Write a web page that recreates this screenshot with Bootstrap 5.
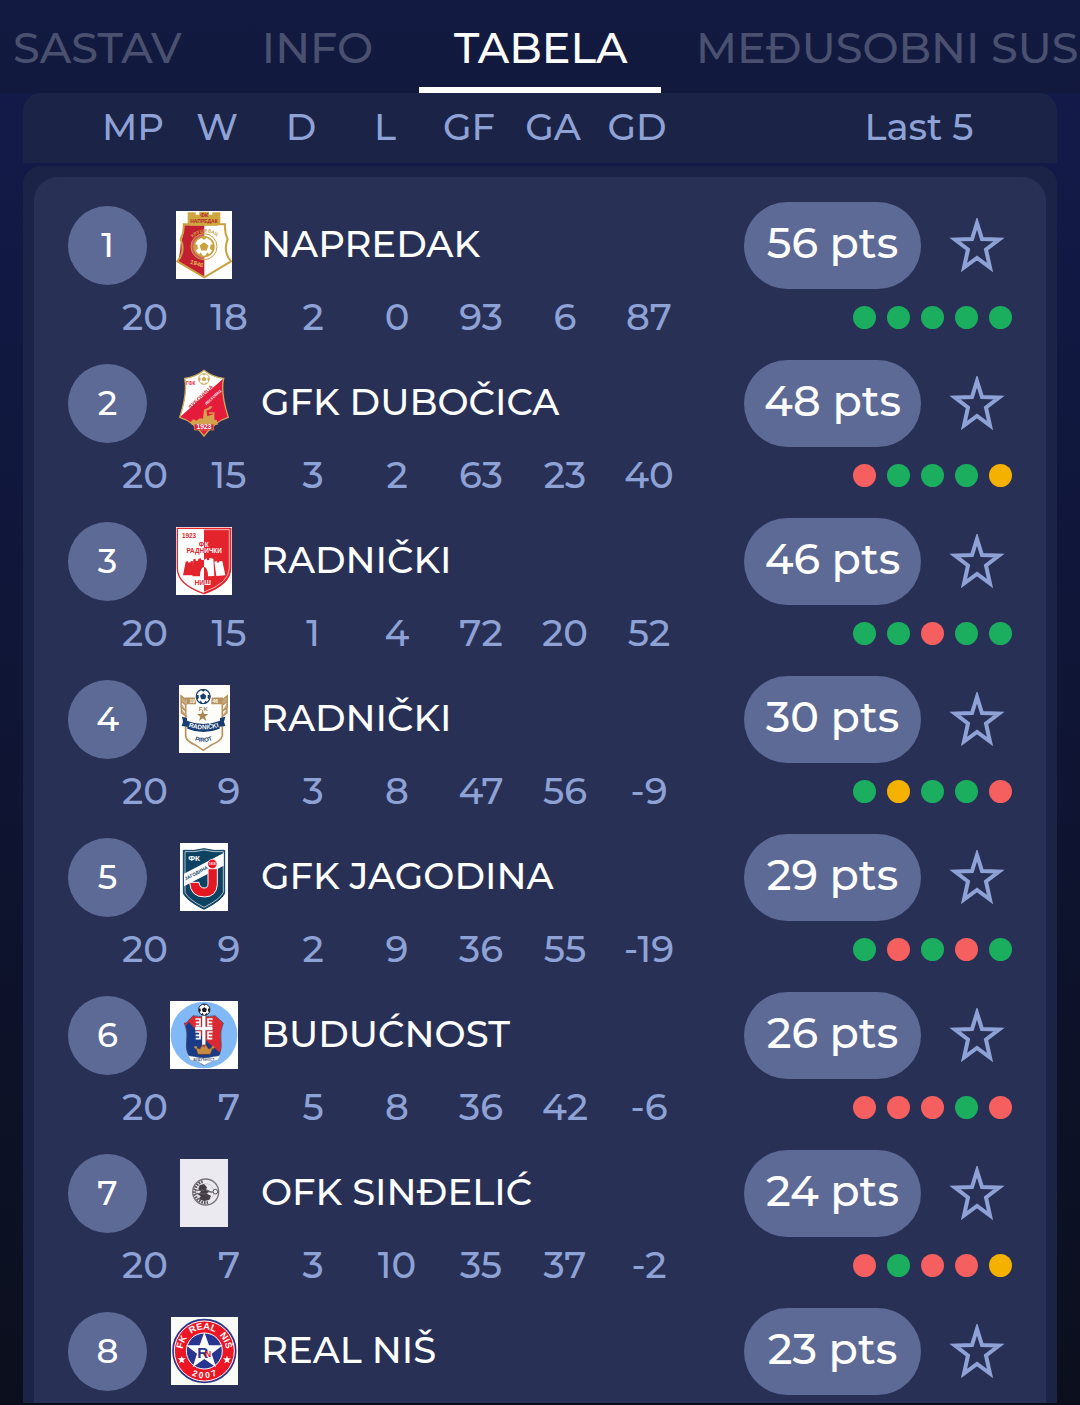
<!DOCTYPE html>
<html lang="sr-Latn">
<head>
<meta charset="utf-8">
<meta name="viewport" content="width=device-width, initial-scale=1">
<title>Tabela</title>
<link rel="stylesheet" href="https://cdn.jsdelivr.net/npm/bootstrap@5.3.0/dist/css/bootstrap.min.css">
<style>
  body { font-family: Montserrat, Inter, "Open Sans", sans-serif; font-weight: 500; color: #fff; background: #0c0f1f; }
  .app { height: 100vh; background: linear-gradient(#131b4c, #0b0f1d); border-bottom: 2px solid #090c1a; }
  .tabs-bar { height: 93px; background: linear-gradient(#121a42, #12193d); }
  .tabs-bar .nav { margin-left: -22px; }
  .tabs-bar .nav-link { min-width: 203px; height: 93px; padding: 5px 35px 0; font-size: 43px; line-height: 86px; text-align: center; white-space: nowrap; color: #4a5070; border-bottom: 6px solid transparent; border-radius: 0; }
  .tabs-bar .tab-wide { min-width: 238px; }
  .tabs-bar .nav-link.active { min-width: 242px; color: #fff; border-bottom-color: #fff; }
  .standings { margin: 0 23px; color: #8fa2d6; font-size: 37px; line-height: 56px; }
  .standings th { font-weight: 500; }
  .head-panel { height: 70px; padding: 5px 0 0 68px; background: #1b2347; border-radius: 18px 18px 0 0; }
  .body-panel { margin-top: 3px; padding: 11px 11px 0; background: #1b2347; border-radius: 18px 18px 0 0; }
  .body-card { padding-top: 25px; background: #283056; border-radius: 24px 24px 0 0; }
  .num-cell { width: 84px; text-align: center; }
  .last-head { width: 276px; text-align: center; }
  .team-line { height: 87px; padding: 0 34px; color: #fff; }
  .team-name { padding-bottom: 4px; }
  .stat-line { height: 56px; padding: 0 33px 0 69px; margin-bottom: 15px; }
  .rank { width: 79px; height: 79px; padding-bottom: 2px; font-size: 34px; background: #5e6a96; }
  .crest-box { width: 114px; padding-bottom: 2px; }
  .crest-box svg { height: 68px; width: auto; }
  .pts { width: 177px; height: 87px; padding-bottom: 5px; font-size: 43px; background: #5e6a96; }
  .fav { width: 56px; height: 56px; margin-left: 28px; margin-right: 7px; }
  .dots { gap: 11px; padding-top: 2px; }
  .dot { width: 23px; height: 23px; }
  .dot-w { background: #1bae5e; }
  .dot-d { background: #f5b100; }
  .dot-l { background: #f55f5f; }
  svg text { font-family: "Liberation Sans", sans-serif; font-weight: 700; text-anchor: middle; }
</style>
<script src="https://cdn.jsdelivr.net/npm/bootstrap@5.3.0/dist/js/bootstrap.bundle.min.js"></script>
</head>
<body>

<svg class="d-none" aria-hidden="true">
  <symbol id="ball" viewBox="0 0 40 40">
    <circle cx="20" cy="20" r="18" fill="#fff" stroke="currentColor" stroke-width="3"/>
    <path fill="currentColor" d="M20 12l8 6-3 9H15l-3-9zM14 3h12l-6 5zM2 16l6 0 1 8-5 4zM38 16l-6 0-1 8 5 4zM10 35l4-5 4 8zM30 35l-4-5-4 8z"/>
  </symbol>
</svg>

<div class="app d-flex flex-column overflow-hidden">
  <header class="tabs-bar flex-shrink-0 overflow-hidden">
    <nav class="nav flex-nowrap">
      <a class="nav-link tab-wide" href="#sastav">SASTAV</a>
      <a class="nav-link" href="#info">INFO</a>
      <a class="nav-link active" aria-current="page" href="#tabela">TABELA</a>
      <a class="nav-link" href="#susreti">MEĐUSOBNI SUS</a>
    </nav>
  </header>

  <main class="flex-grow-1 overflow-hidden d-flex flex-column">
    <table class="standings d-flex flex-column flex-grow-1">
      <thead class="head-panel d-block flex-shrink-0">
        <tr class="d-flex">
          <th class="num-cell" scope="col">MP</th>
          <th class="num-cell" scope="col">W</th>
          <th class="num-cell" scope="col">D</th>
          <th class="num-cell" scope="col">L</th>
          <th class="num-cell" scope="col">GF</th>
          <th class="num-cell" scope="col">GA</th>
          <th class="num-cell" scope="col">GD</th>
          <th class="last-head ms-auto" scope="col">Last 5</th>
        </tr>
      </thead>
      <tbody class="body-panel d-flex flex-column flex-grow-1">
        <tr class="body-card d-block flex-grow-1"><td class="d-block p-0"><table class="d-block w-100"><tbody class="d-block" id="teams"></tbody></table></td></tr>
      </tbody>
    </table>
  </main>
</div>

<template id="crests">
  <svg viewBox="48 33 169 204">
    <path fill="#fff" d="M48 33h169v204H48z"/>
    <path fill="#c22032" d="M133 76H72q-2 32-10 55-1 32-9 53l80 49z"/>
    <path fill="none" stroke="#c9a13d" stroke-width="6" d="M71 73H195Q193 97 203 118 188 155 213 184L133 232 52 184Q78 155 62 118 73 97 71 73z"/>
    <path fill="#d0a63e" d="M83 37h24v7h11v-9h29v9h10v-7h24v34l-10 6H93l-10-6z"/>
    <circle cx="132" cy="140" r="39" fill="#fff" fill-opacity=".25" stroke="#c9a13d" stroke-width="3"/>
    <use href="#ball" x="99" y="107" width="66" height="66" color="#c9a13d"/>
    <text x="133" y="51" font-size="17" fill="#b3242c">ФК</text>
    <text x="132" y="69" font-size="15" fill="#b3242c">НАПРЕДАК</text>
    <path id="arc1" fill="none" d="M91 119Q132 78 178 113"/>
    <text font-size="14" fill="#c9a13d"><textPath href="#arc1" startOffset="50%">КРУШЕВАЦ</textPath></text>
    <text x="110" y="197" font-size="18" fill="#e5b64c" transform="rotate(18 110 192)">1946</text>
  </svg>
  <svg viewBox="57 33 150 204">
    <path fill="#fff" d="M132 37Q158 58 191 61 181 105 205 178 166 189 132 234 98 189 59 178 83 105 74 61 106 58 132 37z"/>
    <path fill="#e51b3c" d="M191 61Q181 105 205 178 166 189 132 234 98 189 59 178z"/>
    <path fill="none" stroke="#cda654" stroke-width="4" d="M132 37Q158 58 191 61 181 105 205 178 166 189 132 234 98 189 59 178 83 105 74 61 106 58 132 37z"/>
    <use href="#ball" x="114" y="45" width="36" height="36" color="#d0a956"/>
    <text x="92" y="80" font-size="14" fill="#dd2a42">ГФК</text>
    <text x="122" y="123" font-size="17" fill="#d52740" transform="rotate(-44 122 117)">ДУБОЧИЦА</text>
    <text x="159" y="122" font-size="11" fill="#fff" transform="rotate(-43 159 118)">ЛЕСКОВАЦ</text>
    <path fill="#d5a34e" d="M96 200l-5-7 9-9 10 4 9-7 10 1 3-26h7l3 19 21-8v18l7 1 4 14zM133 154q14-3 16-9h8q-3 12-24 13zM147 163h16l1 4h-17z"/>
    <path fill="#e51b3c" stroke="#d5a34e" stroke-width="2" d="M103 198h58v18h-58z"/>
    <text x="132" y="214" font-size="20" fill="#fff">1923</text>
  </svg>
  <svg viewBox="48 33 168 204">
    <path fill="#fff" d="M48 33h168v204H48z"/>
    <path fill="#e3242c" d="M132 38h80v119q0 49-80 77z"/>
    <path fill="none" stroke="#e3242c" stroke-width="4" d="M52 37h160v120q-1 49-80 76-80-27-80-76z"/>
    <path fill="none" stroke="#fff" stroke-width="2" d="M132 41h76v116q-1 44-76 71"/>
    <text x="87" y="65" font-size="19" fill="#e3242c">1923</text>
    <text x="124" y="92" font-size="19" fill="#e3242c">Ф</text><text x="140" y="92" font-size="19" fill="#fff">К</text>
    <text x="132" y="112" font-size="19" fill="#e3242c" style="text-anchor:end">РАДН</text><text x="133" y="112" font-size="19" fill="#fff" style="text-anchor:start">ИЧКИ</text>
    <path fill="#e3242c" d="M69 178l8-41 7-2 1 5 7-1v-4l7 1-1 42zM97 181l3-51 7-2v6h7l1-6 8-1 1 5h8v20q-12 3-12 29z"/>
    <path fill="#fff" d="M132 132l8-5 1 6 7-1v-6l12 2 3 52-19 1q0-26-12-29zM163 137l8-2 1 6 6-2v-4l9 1 9 42-27 2z"/>
    <text x="132" y="208" font-size="20" fill="#e3242c" style="text-anchor:end">НИ</text><text x="133" y="208" font-size="20" fill="#fff" style="text-anchor:start">Ш</text>
  </svg>
  <svg viewBox="57 33 153 204">
    <path fill="#fefdf9" d="M57 33h153v204H57z"/>
    <path fill="none" stroke="#b7925e" stroke-width="5" d="M79 73h108v112q-4 17-32 27l-25 17-25-17q-27-10-28-27V73z"/>
    <path fill="#c9ab80" stroke="#b7925e" stroke-width="4" d="M79 78L63 65v17l16 12M63 85v15l16 12M64 103v14l16 10M187 78l15-13v17l-15 12M202 85v15l-15 12M201 103v14l-14 10"/>
    <path fill="#b7925e" d="M80 73h28v18H80zM154 73h33v18h-33z"/>
    <circle cx="130" cy="68" r="26" fill="#fefdf9"/>
    <use href="#ball" x="106" y="44" width="47" height="47" color="#173d6b"/>
    <text x="97" y="88" font-size="15" fill="#fefdf9">19</text><text x="166" y="88" font-size="15" fill="#fefdf9">46</text>
    <text x="130" y="112" font-size="18" fill="#a5845a">F.K</text>
    <path fill="#aa834e" d="M128 108l4 12h13l-10 8 4 13-11-8-11 8 4-13-10-8h13z"/>
    <path fill="#173d72" d="M66 128l15 4v8q49 20 99 0v-8l16-4-4 15 4 13-17 2v6q-49 20-97 0v-6l-17-2 4-13z"/>
    <path id="arc4" fill="none" d="M82 157q47 18 98 0"/>
    <text font-size="19" fill="#fff"><textPath href="#arc4" startOffset="50%">RADNIČKI</textPath></text>
    <path id="arc4b" fill="none" d="M100 196q30 16 62 0"/>
    <text font-size="18" fill="#173d72"><textPath href="#arc4b" startOffset="50%">PIROT</textPath></text>
  </svg>
  <svg viewBox="60 33 144 204">
    <path fill="#fff" d="M60 33h144v204H60z"/>
    <path fill="#0e4262" stroke="#0e4262" stroke-width="3" d="M70 55q32 3 62-5 31 8 62 5v129q-10 22-62 48-52-26-62-48z"/>
    <path fill="none" stroke="#fff" stroke-width="2" d="M75 59q31 2 57-5 26 7 58 5v122q-9 20-58 45-49-25-57-45z"/>
    <path fill="#fff" d="M72 125l119-62v38L72 163z"/>
    <text x="102" y="87" font-size="24" fill="#fff">ФК</text>
    <text x="108" y="128" font-size="14" fill="#0e4262" transform="rotate(-28 108 122)">ЈАГОДИНА</text>
    <path fill="#e51723" stroke="#fff" stroke-width="3" d="M144 110h28v47q-2 37-38 38-43 0-45-44h28q2 17 16 17 11 0 11-13z"/>
    <circle cx="157" cy="96" r="14" fill="#e51723" stroke="#fff" stroke-width="2"/>
    <text x="157" y="100" font-size="9" fill="#fff">1918</text>
  </svg>
  <svg viewBox="30 33 204 204">
    <path fill="#fff" d="M30 33h204v204H30z"/><circle cx="132" cy="135" r="100" fill="#80b9f5"/>
    <path fill="#db2931" d="M78 99l21-22q33 7 66 0l25 22q-11 25-7 52 6 49-25 58l-26 17-27-17q-31-9-25-58 4-27-7-52z"/>
    <path fill="#193b88" d="M87 96q35 45 94 93-6 14-23 20l-26 17-27-17q-31-9-25-58 3-25-3-43z"/>
    <path fill="none" stroke="#48445e" stroke-width="2" d="M78 99l21-22q33 7 66 0l25 22q-11 25-7 52 6 49-25 58l-26 17-27-17q-31-9-25-58 4-27-7-52z"/>
    <path fill="#fff" stroke="#333d59" stroke-width="1" d="M126 74h11v36h21v11h-21v55h-11v-55h-21v-11h21z"/>
    <path fill="none" stroke="#fff" stroke-width="5" d="M106 87h14v20h-13M107 97h12M158 87h-14v20h13M157 97h-12M106 126h14v20h-13M107 136h12M158 126h-14v20h13M157 136h-12"/>
    <use href="#ball" x="114" y="40" width="38" height="38" color="#18191f"/>
    <path fill="#c88c43" stroke="#644629" stroke-width="2" d="M107 172l12 5 9-12 10 0 8 12 13-5-8 21h-37z"/>
    <circle cx="107" cy="172" r="4" fill="#c88c43"/><circle cx="159" cy="172" r="4" fill="#c88c43"/><circle cx="132" cy="168" r="4" fill="#cd3c30"/>
    <path fill="#fff" stroke="#718096" d="M84 197l20 3q28 8 56 0l21-3-8 14-15 2-25 13-25-13-16-2z"/>
    <text x="132" y="212" font-size="10" fill="#45536f">БУДУЋНОСТ</text>
  </svg>
  <svg viewBox="60 33 144 204">
    <path fill="#eceaf1" d="M60 33h144v204H60z"/>
    <circle cx="137" cy="132" r="39" fill="#eceaf1" stroke="#77737c" stroke-width="4"/>
    <circle cx="137" cy="132" r="25" fill="none" stroke="#89848c" stroke-width="1"/>
    <path fill="#433e45" d="M119 112l13-4 9 10-3 8 10 3-8 8 13 6-5 12-15 4-17-5 6-9-9-7 10-7-8-7z"/>
    <path fill="none" stroke="#625d65" stroke-width="3" d="M105 127h29M106 137h36M139 125l16 8M145 132h29"/>
    <circle cx="166" cy="131" r="7" fill="#eceaf1" stroke="#514d54" stroke-width="3"/>
    <path fill="none" stroke="#59545c" stroke-width="9" stroke-dasharray="5 3" d="M128 101a32 32 0 0 0 0 62q8 2 16 0"/>
  </svg>
  <svg viewBox="33 33 201 204">
    <path fill="#fafcf7" d="M33 33h201v204H33z"/>
    <circle cx="133" cy="135" r="94" fill="#ee1624" stroke="#28368f" stroke-width="5"/>
    <circle cx="133" cy="135" r="90" fill="none" stroke="#fff" stroke-width="3"/>
    <circle cx="133" cy="135" r="54" fill="#28368f" stroke="#fff" stroke-width="3"/>
    <path fill="#fff" d="M133 79l14 39h41l-33 25 13 41-35-25-35 25 13-41-33-25h41z"/>
    <path id="ring8" fill="none" d="M72 158A65 65 0 1 1 194 158"/>
    <text font-size="28" fill="#fff"><textPath href="#ring8" startOffset="50%">FK&#160;&#160;REAL&#160;&#160;NIŠ</textPath></text>
    <path id="ring8b" fill="none" d="M66 182A82 82 0 0 0 200 182"/>
    <text font-size="26" fill="#fff"><textPath href="#ring8b" startOffset="50%">2&#160;0&#160;0&#160;7</textPath></text>
    <path fill="#fff" d="M65 149l3 8h9l-7 6 3 9-8-5-8 5 3-9-7-6h9zM201 149l3 8h9l-7 6 3 9-8-5-8 5 3-9-7-6h9z"/>
    <text x="128" y="155" font-size="46" fill="#28368f">R</text><text x="144" y="154" font-size="27" fill="#ee1624">N</text>
  </svg>
</template>

<script>
  const teams = [
    ['NAPREDAK', 56, [20, 18, 2, 0, 93, 6, 87], 'wwwww'],
    ['GFK DUBOČICA', 48, [20, 15, 3, 2, 63, 23, 40], 'lwwwd'],
    ['RADNIČKI', 46, [20, 15, 1, 4, 72, 20, 52], 'wwlww'],
    ['RADNIČKI', 30, [20, 9, 3, 8, 47, 56, -9], 'wdwwl'],
    ['GFK JAGODINA', 29, [20, 9, 2, 9, 36, 55, -19], 'wlwlw'],
    ['BUDUĆNOST', 26, [20, 7, 5, 8, 36, 42, -6], 'lllwl'],
    ['OFK SINĐELIĆ', 24, [20, 7, 3, 10, 35, 37, -2], 'lwlld'],
    ['REAL NIŠ', 23, [], '']
  ];
  const crests = document.getElementById('crests').content.children;
  document.getElementById('teams').innerHTML = teams.map(([name, pts, stats, form], i) => `
    <tr class="d-block">
      <th class="team-line d-flex align-items-center" scope="rowgroup">
        <span class="rank rounded-circle d-flex align-items-center justify-content-center">${i + 1}</span>
        <span class="crest-box d-flex justify-content-center">${crests[i].outerHTML}</span>
        <span class="team-name">${name}</span>
        <span class="pts rounded-pill ms-auto d-flex align-items-center justify-content-center">${pts} pts</span>
        <button type="button" class="fav btn p-0 border-0 d-flex" aria-label="Omiljeni: ${name}">
          <svg viewBox="0 0 56 56" width="56" height="56"><path d="M28 5l5 16 17 .5-13 10 4 18L28 40l-13 9.500 4-18-13-10 17-.5z" fill="none" stroke="#8fa2d6" stroke-width="4"/></svg>
        </button>
      </th>
    </tr>
    <tr class="stat-line d-flex align-items-center">
      ${stats.map(n => `<td class="num-cell">${n}</td>`).join('')}
      <td class="dots d-flex ms-auto">${[...form].map(r => `<span class="dot dot-${r} rounded-circle"></span>`).join('')}</td>
    </tr>`).join('');
</script>
</body>
</html>
